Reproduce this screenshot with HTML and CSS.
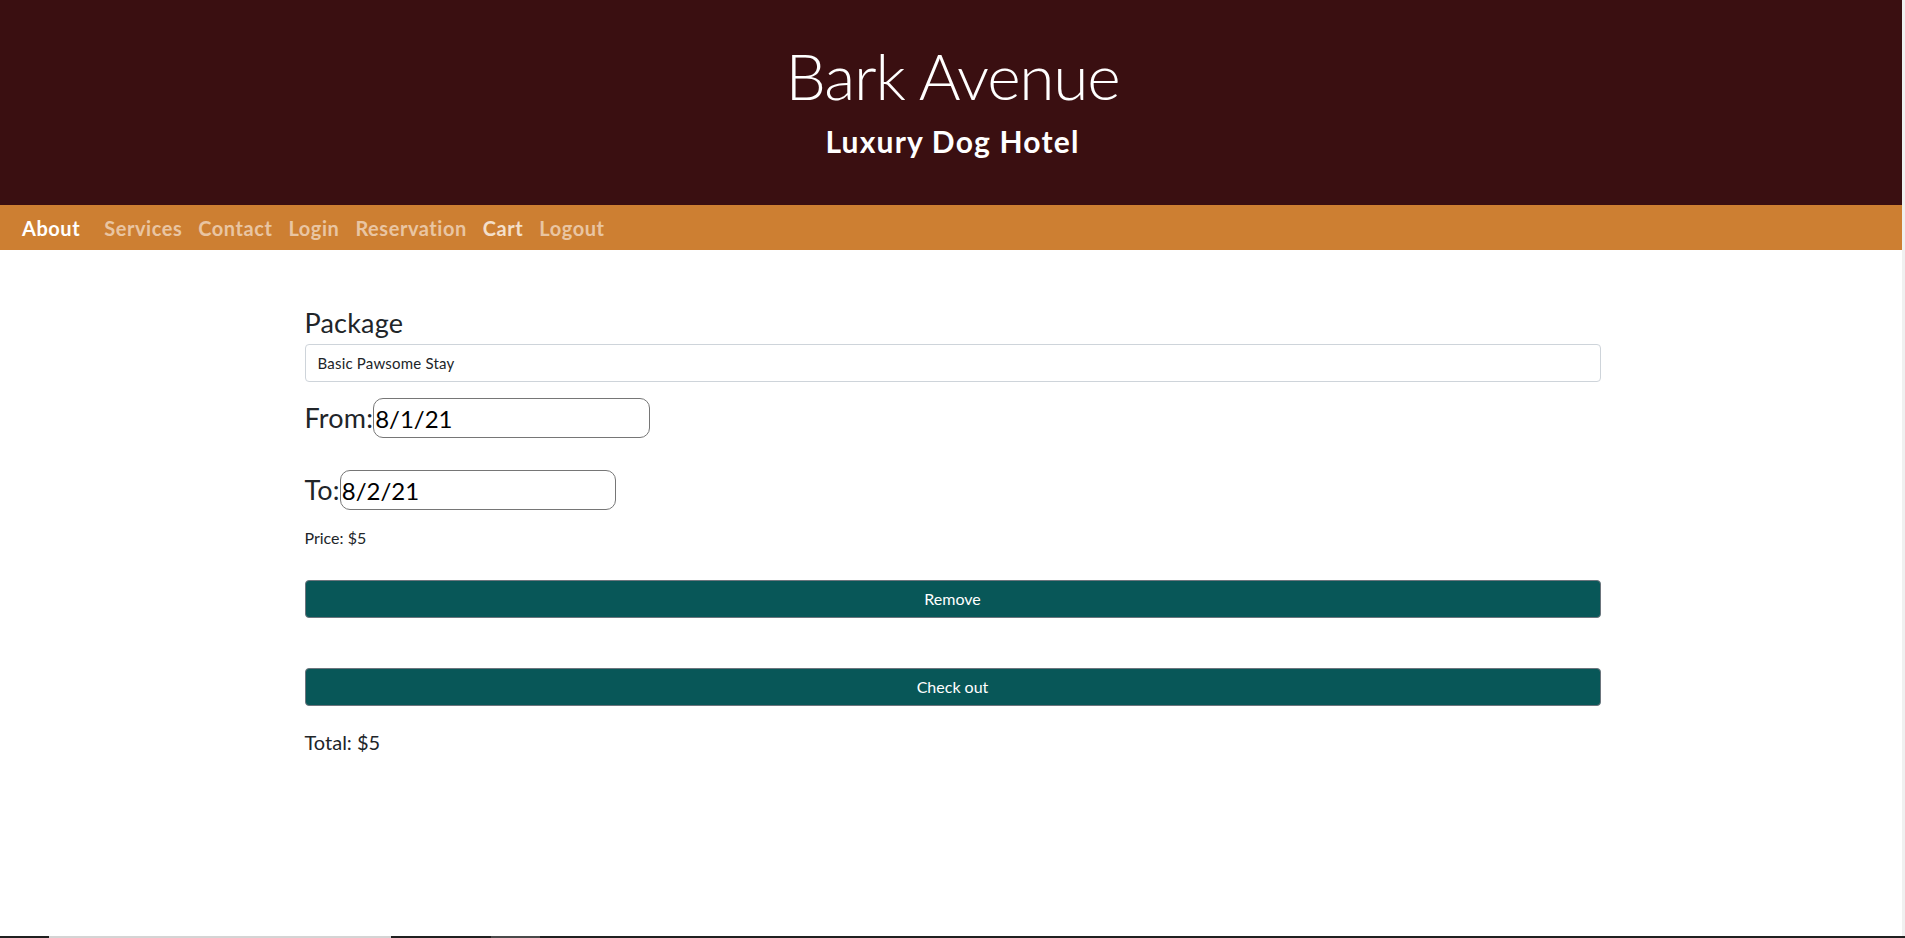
FILE: index.html
```html
<!DOCTYPE html>
<html lang="en">
<head>
<meta charset="utf-8">
<title>Bark Avenue - Cart</title>
<link rel="stylesheet" href="styles.css">
</head>
<body>
<header class="hero">
  <h1 class="hero-title">Bark Avenue</h1>
  <h2 class="hero-subtitle">Luxury Dog Hotel</h2>
</header>
<nav class="navbar">
  <a class="nav-brand" href="#">About</a>
  <a class="nav-link" href="#">Services</a>
  <a class="nav-link" href="#">Contact</a>
  <a class="nav-link" href="#">Login</a>
  <a class="nav-link" href="#">Reservation</a>
  <a class="nav-link active" href="#">Cart</a>
  <a class="nav-link" href="#">Logout</a>
</nav>
<main class="container">
  <section class="cart-item">
    <label class="field-label">Package</label>
    <input class="form-control" type="text" value="Basic Pawsome Stay" readonly>
    <div class="date-row from-row">
      <label class="field-label">From:</label>
      <input class="date-input from-input" type="text" value="8/1/21">
    </div>
    <div class="date-row to-row">
      <label class="field-label">To:</label>
      <input class="date-input to-input" type="text" value="8/2/21">
    </div>
    <p class="price">Price: $5</p>
    <button class="btn remove-btn" type="button">Remove</button>
  </section>
  <button class="btn checkout-btn" type="button">Check out</button>
  <p class="total">Total: $5</p>
</main>
<div class="scroll-track"></div>
<div class="taskbar"><span class="task task-light"></span><span class="task task-grey"></span></div>
</body>
</html>
```
FILE: styles.css
```css
body {
  margin: 0;
  min-height: 100vh;
  background: #ffffff;
  font-family: Lato, "Open Sans", sans-serif;
  color: #212529;
}
.hero {
  height: 205px;
  box-sizing: border-box;
  padding-top: 38px;
  background: #3a0f11;
  color: #ffffff;
  text-align: center;
}
.hero-title {
  margin: 0;
  font-size: 64px;
  font-weight: 300;
  line-height: 1.2;
  letter-spacing: -1.2px;
}
.hero-subtitle {
  margin: 8px 0 0;
  font-size: 30px;
  font-weight: 700;
  line-height: 1.2;
  letter-spacing: 1.2px;
}
.navbar {
  height: 45px;
  display: flex;
  align-items: center;
  padding-left: 22px;
  background: #cd7f32;
  font-size: 20px;
  font-weight: 700;
  line-height: 1.2;
  letter-spacing: 0.55px;
}
.navbar a {
  text-decoration: none;
}
.nav-brand {
  color: #ffffff;
  margin-right: 24px;
}
.nav-link {
  color: #e9c5a2;
  margin-right: 16px;
}
.nav-link.active {
  color: #f4dfca;
}
.container {
  width: 1296px;
  margin: 0 auto;
  padding-top: 57px;
}
.cart-item {
  display: flex;
  flex-direction: column;
  align-items: flex-start;
}
.field-label {
  font-size: 27px;
  line-height: 32px;
  letter-spacing: 0.2px;
}
.form-control {
  align-self: stretch;
  height: 38px;
  margin-top: 5px;
  box-sizing: border-box;
  padding: 0 12px;
  border: 1px solid #ced4da;
  border-radius: 4px;
  font-family: inherit;
  font-size: 15px;
  letter-spacing: 0.2px;
  color: #212529;
  background: #ffffff;
}
.date-row {
  display: flex;
  align-items: baseline;
}
.from-row {
  margin-top: 16px;
}
.to-row {
  margin-top: 32px;
}
.date-input {
  height: 40px;
  box-sizing: border-box;
  padding: 0 1px;
  border: 1px solid #767676;
  border-radius: 10px;
  font-family: inherit;
  font-size: 24px;
  color: #000000;
  background: #ffffff;
}
.from-input {
  width: 277px;
}
.to-input {
  width: 276px;
}
.price {
  margin: 16px 0 0;
  font-size: 16px;
  line-height: 24px;
}
.btn {
  display: block;
  width: 100%;
  height: 38px;
  box-sizing: border-box;
  border: 1px solid #6c757d;
  border-radius: 4px;
  background: #085758;
  color: #ffffff;
  font-family: inherit;
  font-size: 16px;
  line-height: 1.5;
}
.remove-btn {
  margin-top: 30px;
}
.checkout-btn {
  margin-top: 50px;
}
.total {
  margin: 24px 0 0;
  font-size: 20px;
  line-height: 24px;
}
.scroll-track {
  position: fixed;
  top: 0;
  right: 0;
  width: 3px;
  height: 100vh;
  background: #f0f0f0;
}
.taskbar {
  position: fixed;
  left: 0;
  right: 0;
  bottom: 0;
  height: 2px;
  display: flex;
  background: #202020;
}
.task {
  height: 2px;
}
.task-light {
  width: 342px;
  margin-left: 49px;
  background: #d4d4d4;
}
.task-grey {
  width: 49px;
  margin-left: 100px;
  background: #4a4a4a;
}
```
